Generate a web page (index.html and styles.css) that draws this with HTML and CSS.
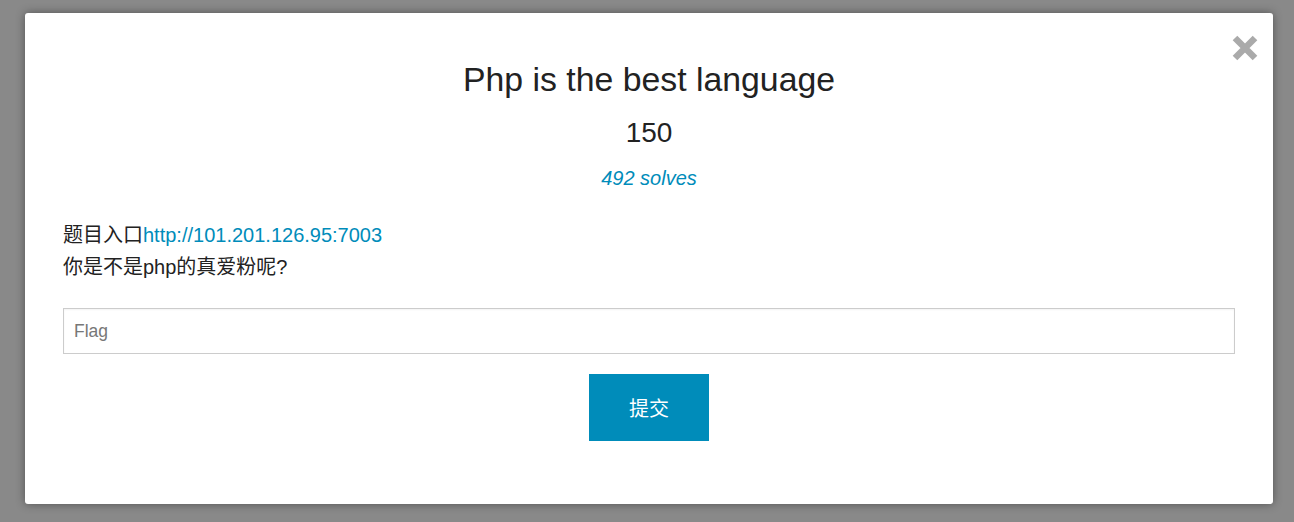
FILE: index.html
```html
<!DOCTYPE html>
<html lang="zh">
<head>
<meta charset="utf-8">
<title>Challenge</title>
<link rel="stylesheet" href="styles.css">
</head>
<body>
<div class="modal">
  <a class="close" href="#" aria-label="Close">
    <svg width="26" height="26" viewBox="0 0 26 26"><path d="M3 3 L23 23 M23 3 L3 23" stroke="#aaaaaa" stroke-width="6.5" stroke-linecap="butt" fill="none"/></svg>
  </a>
  <h3 class="title">Php is the best language</h3>
  <h4 class="value">150</h4>
  <p class="solves">492 solves</p>
  <div class="desc">
    <p>题目入口<a href="#">http://101.201.126.95:7003</a></p>
    <p>你是不是php的真爱粉呢?</p>
  </div>
  <form class="flag-form">
    <input class="flag-input" type="text" placeholder="Flag">
    <div class="actions"><button class="submit" type="button">提交</button></div>
  </form>
</div>
</body>
</html>
```
FILE: styles.css
```css
html, body {
  margin: 0;
  padding: 0;
}
body {
  background: #898989;
  height: 522px;
  overflow: hidden;
  font-family: "Liberation Sans", "Noto Sans CJK SC", sans-serif;
  color: #222222;
  padding-top: 13px;
  box-sizing: border-box;
}
.modal {
  position: relative;
  margin-left: 25px;
  width: 1248px;
  height: 491px;
  box-sizing: border-box;
  background: #ffffff;
  border-radius: 3px;
  box-shadow: 0 0 10px rgba(0, 0, 0, 0.4);
  padding: 46px 38px 0 38px;
}
.close {
  position: absolute;
  top: 22px;
  right: 15px;
  width: 26px;
  height: 26px;
  display: block;
}
.close svg { display: block; }
.title {
  margin: 0;
  text-align: center;
  font-weight: normal;
  font-size: 33.8px;
  line-height: 40px;
}
.value {
  margin: 17px 0 0 0;
  text-align: center;
  font-weight: normal;
  font-size: 28px;
  line-height: 34px;
}
.solves {
  margin: 16px 0 0 0;
  text-align: center;
  font-style: italic;
  color: #008cba;
  font-size: 20px;
  line-height: 24px;
}
.desc {
  margin-top: 29px;
}
.desc p {
  margin: 0;
  font-size: 20px;
  line-height: 32px;
}
.desc a {
  color: #008cba;
  text-decoration: none;
}
.flag-form {
  margin-top: 25px;
}
.flag-input {
  display: block;
  width: 100%;
  height: 46px;
  box-sizing: border-box;
  border: 1px solid #cccccc;
  padding: 0 10px;
  font-family: "Liberation Sans", "Noto Sans CJK SC", sans-serif;
  font-size: 17.5px;
  color: #222;
  outline: none;
  box-shadow: inset 0 1px 2px rgba(0,0,0,0.05);
}
.flag-input::placeholder {
  color: #777777;
}
.actions {
  display: flex;
  justify-content: center;
  margin-top: 20px;
}
.submit {
  width: 120px;
  height: 67px;
  border: none;
  background: #008cba;
  color: #ffffff;
  font-family: "Liberation Sans", "Noto Sans CJK SC", sans-serif;
  font-size: 20px;
  padding: 0;
  cursor: pointer;
}
```
